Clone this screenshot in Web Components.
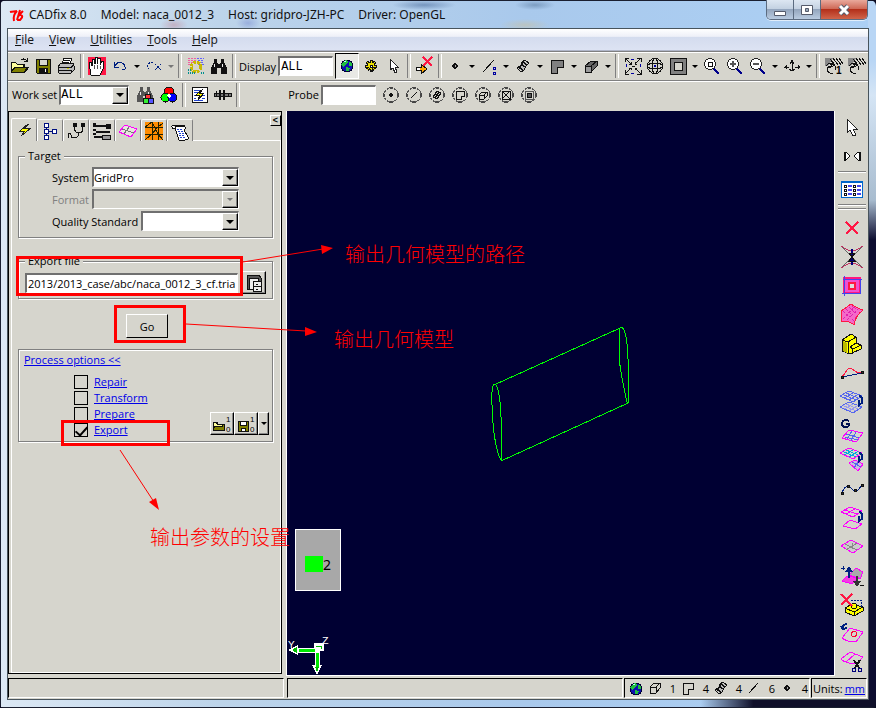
<!DOCTYPE html>
<html lang="en">
<head>
<meta charset="utf-8">
<title>CADfix 8.0</title>
<style>
html,body{height:100%;margin:0}
body{background:#0b0b22;overflow:hidden;font:11px "Open Sans","Noto Sans","Noto Sans CJK SC",sans-serif;color:#000}
</style>
</head>
<body>
<cad-window></cad-window>
<script>
const mesh = (x, y, c, c2) => `<g stroke="${c}" transform="translate(${x} ${y})"><path d="M0 5 9 0 22 5 13 11z"/><path stroke="${c2}" d="M3 3.500 16 9M6 2 18 7M4.500 7 13.500 1.500M9 9 18 3.500"/></g>`;
const ring = inner => `<g stroke="#555"><circle cx="11" cy="11" r="7" stroke-dasharray="3 1"/></g><path fill="#444" stroke="none" d="M9 3h4l-2 3zM9 19h4l-2-3zM3 9v4l3-2zM19 9v4l-3-2z"/>${inner}`;
const lens = inner => `<path d="M13 14 18 19" stroke="#00008b" stroke-width="2.500"/><circle cx="9" cy="9" r="5.500" fill="#fff" stroke="#222"/>${inner}`;
const binoc = c => `<path fill="${c}" stroke="none" d="M6 4h3v3l1 2h2l1-2V4h3v3l3 6v6h-6v-6H9v6H3v-6l3-6z"/><path stroke="#eee" d="M6 9v3M14 9v3"/>`;
const globe = `<circle cx="11" cy="11" r="6" fill="#1010b0" stroke="#003"/><path fill="#20c040" stroke="none" d="M7 7l3-2 2 2-2 3-3 2-2-2zM13 7l3 1 0 3-3 0zM10 12l4 1-1 3-3 0z"/><path stroke="#bff" d="M8 6h2"/>`;
const handLines = `<path fill="#888" stroke="none" d="M2 3h8l-5 8H2z"/><path stroke="#111" d="M3 11c3-4 6-2 5 0-4 0-5 5-1 7h3M7 4l5 6M10 3l5 7M13 3l5 7M16 3l4 6M5 13l5-2M8 8l4 3v4"/>`;
const ICONS = {
  open:`<path fill="#808000" d="M2 17V7h4l2 2h7v3h4l-4 5z"/><path fill="#ffff9c" d="M2 16V7h4l2 2h6v3H6z"/><path d="M2.500 17 6 12h14l-4 5zM12 5c2-2 4-1 6 1M18 3v3h-3"/>`,
  save:`<path fill="#808000" d="M4 4h14v14H5l-1-1z"/><path fill="#d8d8d0" d="M7 4h8v6H7z"/><path fill="#111" d="M7 13h8v5H7z"/><path stroke="#fff" d="M13 14v3"/>`,
  print:`<path fill="#fff" d="M7 9 9 3h8l-2 6z"/><path fill="#bbb" d="M3 12 6 8h12l1 3v4l-3 3H4z"/><path d="M9 5h6M8 7h6M3 12h13l3-2M4 15h12v3M16 13l3-3"/><path stroke="#d0d000" d="M12 13h2"/>`,
  hand:`<path fill="#ff1744" stroke="none" d="M2 2h18v18H2z"/><path fill="#fff" d="M5 20 4 14 3 8l2-1 1 4V4h2l1 5V2h2v7l1-6h2v7l2-4h2l-1 8-3 6z"/><path stroke="#555" d="M8 10v4M11 10v4M14 11v3"/>`,
  undo:`<path stroke="#002080" d="M6 10c4-5 11-2 10 4l-3 1M5 7v5h5M6 11l3-3"/>`,
  redo:`<path stroke="#002080" stroke-dasharray="2 1" d="M10 8C3 6 4 14 7 15M12 9l6 6M18 9l-6 6"/>`,
  select:`<path stroke="#f060a0" stroke-dasharray="2 1" d="M3 3h8M3 5h8M3 7h7M3 9h6"/><path stroke="#6060ff" stroke-dasharray="2 1" d="M12 3h7M13 5h6M13 7h6M14 9h5"/><circle cx="11" cy="12" r="5" stroke="#c8b800" stroke-width="3" stroke-dasharray="3 1"/><path stroke="#009090" stroke-width="2" stroke-dasharray="1 1" d="M3 15h4M3 18h7M16 18h3"/>`,
  binoc:binoc('#111'), globe,
  gear:`<circle cx="11" cy="11" r="4" fill="#ece000" stroke="#111"/><path stroke="#111" stroke-width="3" d="M11 5v3M11 14v3M5 11h3M14 11h3M7 7l2 2M13 13l2 2M15 7l-2 2M7 15l2-2"/><path stroke="#ece000" d="M11 6v9M6 11h10M7 7l8 8M15 7l-8 8"/><path fill="#fff" d="M10 10h2v2h-2z"/>`,
  cursor:`<path fill="#fff" stroke="#222" d="M8 4v11l3-2 2 5 2-1-2-5h3z"/>`,
  export:`<path fill="#ffa500" d="M3 12h5V9l6 5-6 5v-4H3z"/><path fill="#fff" stroke="none" d="M4 13h3v2H4z"/><path stroke="#ff1744" stroke-width="2" d="M10 2l9 9M19 2l-9 9"/>`,
  point:`<path fill="#111" d="M11 8l3 3-3 3-3-3z"/><path stroke="#aaa" d="M11 10v2"/>`,
  line:`<path d="M5 17 16 5"/><path stroke="#0000a0" d="M15 12h2v2h-2zM15 17h2v2h-2z"/>`,
  patch:`<path fill="#bbb" stroke="none" d="M6 15l4-9 6 1-4 9z"/><path d="M5 13c1-2 3 0 4-3 1-4 3-5 4-5l4 3c-2 1-3 2-4 5-1 3-3 3-4 4zM7 14l5-8M7 12l4 3M9 9l4 3M11 7l4 3"/>`,
  face:`<path fill="#808080" d="M5 5h12v7h-6v6H5z"/>`,
  solid:`<path fill="#666" d="M5 11 11 6h6v5l-6 6H5z"/><path fill="#999" d="M5 11h6v6H5z"/><path d="M11 11l6-5"/>`,
  fit:`<path d="M3 3l6 6M19 3l-6 6M3 19l6-6M19 19l-6-6M3 7V3h4M15 3h4v4M3 15v4h4M19 15v4h-4M7 9h2V7M13 7v2h2M7 13h2v2M13 15v-2h2M10 11h3"/><path stroke="#0000a0" stroke-dasharray="3 2" d="M9 4h5M9 18h5M4 9v5M18 9v5"/>`,
  wheel:`<circle cx="11" cy="11" r="7.500"/><ellipse cx="11" cy="11" rx="3" ry="7.500"/><ellipse cx="11" cy="11" rx="7.500" ry="3"/><circle cx="11" cy="11" r="1" fill="#fff" stroke="#0000a0"/>`,
  frame:`<path fill="#808080" d="M3 3h16v16H3z"/><path fill="#d6d5cd" d="M7 7h8v8H7z"/>`,
  zoomwin:lens('<path d="M7 7h4v4H7z"/>'), zoomin:lens('<path stroke="#555" stroke-width="2" d="M9 6v6M6 9h6"/>'), zoomout:lens('<path stroke="#555" stroke-width="2" d="M6 9h6"/>'),
  anchor:`<path d="M11 6v10M3 12h5M14 12h5M8 14l3 2 3-2M10 5h2M9 9l2-3 2 3M4 11v2M18 11v2M5 10v4M17 10v4"/>`,
  handone:handLines+'<text x="13" y="19" font-family="Liberation Sans" font-weight="bold" font-size="10" fill="#000" stroke="none">1</text>', handrot:handLines,
  binocrgb:`<g transform="translate(-1 -1)">${binoc('#555')}</g><circle cx="13" cy="13" r="3" fill="#f33"/><circle cx="11" cy="17" r="3" fill="#3e3"/><circle cx="16" cy="17" r="3" fill="#55f"/>`,
  rgb:`<circle cx="11" cy="7.500" r="4.500" fill="#f00"/><circle cx="7.500" cy="13.500" r="4.500" fill="#0f0"/><circle cx="14.500" cy="13.500" r="4.500" fill="#00f"/><path fill="#fff" stroke="none" d="M11 9l2 3-2 2-2-2z"/>`,
  flash:`<path fill="#fff" d="M3 3h15v15H3z"/><path stroke="#24c" d="M5 6h6M5 8h4M5 11h2M13 11h3M5 14h2M5 16h9M13 14h3"/><path fill="#ff0" d="M14 5 7 11h4l-2 5 6-7h-4z"/>`,
  ruler:`<path fill="#777" d="M2 9h17v3H2z"/><path stroke-width="2" d="M8 6v10M12 6v10"/><path d="M4 7v6M16 9v4"/>`,
  p1:ring('<path fill="#111" d="M11 9l2 2-2 2-2-2z"/>'), p2:ring('<path d="M8 14l6-6"/>'),
  p3:ring('<path d="M7 13l4-6 4 2-4 6zM9 10l4 2M13 8l-4 6"/>'), p4:ring('<path d="M7 7h8v5h-3v3H7z"/>'),
  p5:ring('<path d="M7 11l3-3h5v4l-3 3H7zM7 11h5v4M12 11l3-3"/>'), p6:ring('<path d="M7 7h8v8H7zM7 7l8 8M15 7l-8 8"/>'),
  p7:ring('<path stroke="#555" d="M7 7h8v8H7z"/><path fill="#555" d="M9 9h4v4H9z"/>'),
  bolt:`<path fill="#ff0" stroke="#222" d="M15 5 7 12h5l-4 5 10-8h-6l4-4z"/>`,
  tree:`<path stroke="#001080" fill="#fff" d="M5 3h4v4H5zM5 9h4v4H5zM5 15h4v4H5zM13 9h4v4h-4zM7 7v2M7 13v2M9 11h4"/>`,
  steth:`<path d="M3 18v-4l2-1 2 4 1 1 3-1M10 5c-2 3 0 8 4 8s5-5 3-8M14 13c0 5-5 6-8 4"/><path fill="#111" d="M8 3h3v3H8zM16 3h3v3h-3z"/>`,
  tools:`<path stroke-width="2" d="M2 6h16M5 12h14M3 17h9"/><path fill="#111" d="M15 4h4v4h-4z"/><path fill="#999" d="M11 15h8v4h-8z"/><path stroke-width="2" d="M2 4h3M2 10h3M2 14h3"/>`,
  mesh:`<path stroke="#f0f" fill="#e8e4e0" d="M2 12 8 5l12 4-6 8z"/><path stroke="#777" d="M5 9l12 4M12 7 7 14"/>`,
  orange:`<path fill="#ff8c00" stroke="none" d="M2 2h18v18H2z"/><path stroke="#220" d="M9 2v18M15 2v18M2 7h18M2 14h18M2 7l7-5M9 2l6 12M20 3l-5 4-6 7-7 6M15 14l5 6"/>`,
  scroll:`<path fill="#fff" d="M4 5c-3 1 0 5 2 3l1-2h8c2 1 1 4 0 4l4 7c1 2-1 3-3 3h-6L6 8"/><path d="M4 5h9l3 1"/><path stroke="#24c" stroke-dasharray="2 1" d="M8 9h5M9 11h5M10 13h5M10 15h6M11 17h5"/>`,
  browse:`<path fill="#555" d="M4 3h12l2 3v4H6v7H4z"/><path fill="#eee" d="M6 6h9v11H6z"/><path fill="#eee" d="M10 9h8v10h-8z"/><path d="M10 14h8M13 12h2M13 17h2"/>`,
  load10:`<path fill="#808000" d="M2 17V9h4l1 2h6v6z"/><path fill="#ff9" d="M2 15V9h3l1 2h5v2H5z"/><g font-family="Liberation Sans" font-size="8" fill="#000" stroke="none"><text x="15" y="9">1</text><text x="15" y="19">0</text></g>`,
  save10:`<path fill="#808000" d="M3 8h10v10H3z"/><path fill="#fff" d="M5 8h6v4H5zM6 15h4v3H6z"/><g font-family="Liberation Sans" font-size="8" fill="#000" stroke="none"><text x="15" y="9">1</text><text x="15" y="19">0</text></g>`,
  sface:`<path d="M6 6h10v6h-5v5H6z"/>`, ssolid:`<path d="M6 10l4-4h6v5l-4 5H6zM6 10h6v6M12 10l4-4"/>`,
  line2:'<path d="M6 16 15 6"/>',
  /* 24-unit artwork for the vertical tool strip */
  bcursor:`<path fill="#fff" stroke="#222" d="M7 4v14l3-3 3 6 3-1-3-6h4z"/>`,
  mirror:`<path fill="#fff" d="M4 8h2l4 4-4 4H4zM5 8v8M20 8h-2l-4 4 4 4h2zM19 8v8"/>`,
  list:`<path fill="#fff" stroke="#06c" d="M1 4h21v16H1z"/><path stroke="#06c" stroke-width="2" d="M1 5h21"/><path d="M4 8h2v2H4zM4 12h2v2H4zM4 16h2v2H4zM13 8h2v2h-2zM13 12h2v2h-2zM13 16h2v2h-2z"/><path stroke="#44e" stroke-width="2" d="M8 9h4M8 13h4M8 17h4M17 9h4M17 13h4M17 17h4"/>`,
  del:`<path stroke="#ff1744" stroke-width="2" d="M6 6l12 12M18 6 6 18"/>`,
  collapse:`<path stroke="#c03060" d="M1 1c4 3 7 5 11 5s7-2 11-5M1 23c4-3 7-5 11-5s7 2 11 5"/><path stroke="#666" d="M2 2 12 12 2 22M22 2 12 12l10 10"/><path stroke="#00007a" stroke-width="2" d="M12 4v16"/><path fill="#00007a" d="M9 8h6l-3 4zM9 16h6l-3-4z"/>`,
  sqpink:`<path stroke="#ff1780" stroke-width="2" fill="#f050d0" d="M4 4h16v15H4z"/><path fill="#ddd" stroke="#ff1744" stroke-width="2" d="M9 9h6v6H9z"/><path stroke="#44e" d="M4 2v20M2 19h18L20 5M3 5h19"/>`,
  sheet:`<path fill="#f46ac8" stroke="#ff1744" d="M1 8c4-2 8-6 10-7 4 3 8 5 12 6-4 3-8 8-9 15C11 19 5 18 1 18z"/><path stroke="#e020b0" stroke-dasharray="1 1" d="M3 8l11 10M6 6l10 9M9 4l9 8M12 3l8 6M3 16 14 4M7 17 18 6"/>`,
  lego:`<path fill="#ff0" d="M2 8 11 2l5 3v6l5 2v4l-11 5-8-3z"/><path d="M2 8l6 2v12M8 10l8-5M10 15l6-4M10 15l3 2 8-4M12 17v5"/><path fill="#bb0" stroke="none" d="M3 9l4 2v10l-4-2z"/>`,
  curve:`<path stroke="#ff1744" d="M2 15c4-1 4-8 8-8s5 7 12 4"/><path stroke="#002080" d="M2 16l20-4"/><path fill="#333" d="M1 15h2v2H1zM21 10h2v2h-2z"/>`,
  two:mesh(0,1,'#56e','#56e')+mesh(0,12,'#56e','#99e')+`<path stroke="#002080" stroke-width="2" d="M19 6c4 1 4 5 2 8M23 12l-4 3v-5"/>`,
  gmesh:`<g transform="translate(2 11)"><path stroke="#f0f" d="M0 8 7 0 21 3 14 12z"/><path stroke="#56e" d="M4 4l13 4M3 7l13 3M10 1 5 9M14 2 9 11"/></g><path stroke="#001050" stroke-width="2" d="M9 2C4-1 0 4 3 7c3 3 6 1 6-2H6"/>`,
  pair:mesh(0,0,'#f0f','#0ad')+`<path stroke="#f0f" fill="#cbd" d="M9 15l6-3 8 4-5 7z"/><path stroke="#56e" d="M12 14l9 5M14 20l4-6"/><path stroke="#002080" stroke-width="2" d="M19 5c4 1 4 4 2 7M23 10l-4 3v-5"/>`,
  spline:`<path stroke="#002080" d="M2 16c2-6 6-9 9-5s5 4 7 2l4-5"/><path fill="#333" d="M1 15h2v2H1zM7 8h2v2H7zM14 12h2v2h-2zM21 7h2v2h-2z"/>`,
  pink2:`<path stroke="#f0f" d="M1 6 10 1l12 4-9 6zM5 4l12 4M6 8l9-5M3 20l7-6 12 4-7 5z"/><path stroke="#002080" stroke-width="2" d="M19 6c4 1 4 5 2 8M23 12l-4 3v-5"/>`,
  graymesh:`<path stroke="#f0f" fill="#ccc" d="M1 11 11 5l12 6-10 7z"/><path stroke="#888" d="M5 9l12 6M6 15l11-7M12 8v6"/>`,
  plusminus:`<path fill="#aaa" stroke="#f0f" d="M9 11l7-7 7 4-3 7z"/><path fill="#f040e0" stroke="#f0f" d="M2 17l5-5 12 2-7 6z"/><path stroke="#002080" stroke-width="2" d="M9 14V5M6 8l3-4 3 4"/><path stroke="#002080" d="M1 4h4M3 2v4"/><path stroke="#333" stroke-width="2" d="M17 12v8M14 17l3 4 3-4"/><path d="M20 21h4"/>`,
  legox:`<path fill="#ff0" d="M5 15l7-4 11 3v4l-9 5-9-4z"/><path d="M5 15l9 4 9-5M14 19v4"/><ellipse cx="14" cy="13" rx="3" ry="2.500" fill="#ff0"/><path stroke="#002080" stroke-dasharray="2 1" d="M11 7h10v8"/><path stroke="#ff1744" stroke-width="2" d="M1 1l11 12M12 1 1 12"/>`,
  loop:`<path stroke="#f0f" d="M2 16l8-10 13 4-7 10c-6 0-10-1-14-4z"/><circle cx="14" cy="12" r="2.500" stroke="#f03"/><path stroke="#002080" stroke-width="2" d="M7 2C4 2 3 4 3 6M1 4l2 3 4-1"/>`,
  cut:`<path stroke="#f0f" d="M1 8l9-7 13 5-6 7c-6 0-12-1-16-5zM6 11l9-8"/><path stroke-width="2" d="M14 9l5 8M20 9l-5 8"/><circle cx="14" cy="19" r="2" stroke="#00007a"/><circle cx="20" cy="19" r="2" stroke="#00007a"/>`
};

const define = (tag, css, html, setup) => {
  const tpl = document.createElement('template');
  tpl.innerHTML = `<style>:host,*{box-sizing:border-box}${css}</style>${html}`;
  customElements.define(tag, class extends HTMLElement {
    constructor(){ super(); this.attachShadow({mode:'open'}).append(tpl.content.cloneNode(true)); }
    connectedCallback(){ if (setup) setup(this, this.shadowRoot); }
  });
};

define('cad-icon', `:host{display:inline-flex}svg{display:block;fill:none;stroke:#111;stroke-width:1;shape-rendering:crispEdges}`, `<svg aria-hidden="true"></svg>`, (el, r) => {
  const s = el.getAttribute('size') || 22, svg = r.querySelector('svg');
  svg.setAttribute('width', s); svg.setAttribute('height', s); svg.setAttribute('viewBox', `0 0 ${s} ${s}`);
  svg.innerHTML = ICONS[el.getAttribute('name')] || '';
});

define('tool-button', `:host{display:block;flex:0 1 23px;height:26px}button{width:100%;height:100%;padding:0;border:0;background:none;display:flex;align-items:center;justify-content:center;overflow:hidden}
:host([pressed]) button{border:1px solid;border-color:#000 #fff #fff #000;background:#e8e8e4}
:host([raised]) button{border:1px solid;border-color:#fff #000 #000 #fff;box-shadow:inset -1px -1px #888}
:host([big]){flex:0 0 29px;width:100%}:host([raised]){height:23px}`, `<button></button>`, (el, r) => {
  const name = el.getAttribute('icon'), b = r.querySelector('button');
  b.setAttribute('aria-label', name);
  b.innerHTML = `<cad-icon name="${name}" size="${el.hasAttribute('big') ? 24 : 22}"></cad-icon>`;
});

define('tool-caret', `:host{display:block;flex:0 0 11px;height:26px}button{width:100%;height:100%;padding:0;border:0;background:none;display:grid;place-items:center}i{border:3px solid transparent;border-top-color:#000;border-bottom:0}:host([dim]) i{border-top-color:#777}:host([raised]){height:23px}
:host([raised]) button{border:1px solid;border-color:#fff #000 #000 #fff;box-shadow:inset -1px -1px #888}`, `<button aria-label="More"><i></i></button>`);

define('tool-sep', `:host{display:block;flex:0 0 8px;height:24px}:host::before{content:"";display:block;width:2px;height:100%;margin:0 auto;border-left:1px solid #808080;border-right:1px solid #fff}`, ``);

define('tool-bar', `:host{display:flex;align-items:center;height:29px;border-top:1px solid #808080;box-shadow:inset 0 1px #fff;padding:0 0 0 1px;white-space:nowrap}:host([second]){height:31px;padding:0 0 3px 3px}`, `<slot></slot>`);

define('text-entry', `:host{display:block}input{display:block;width:100%;height:20px;padding:1px 1px 0;border:1px solid;border-width:2px 1px 1px 2px;border-color:#707070 #fff #fff #707070;border-radius:0;background:#fff;font:inherit;color:#000;outline:0}`, `<input>`, (el, r) => {
  const i = r.querySelector('input'); i.value = el.getAttribute('value') || ''; i.setAttribute('aria-label', el.getAttribute('label'));
});

define('combo-box', `:host{display:grid;grid-template-columns:1fr 16px;grid-template-rows:100%;height:20px;border:1px solid;border-width:2px 1px 1px 2px;border-color:#707070 #fff #fff #707070;background:#fff;color:#000}
:host([disabled]){background:#d6d5cd}select{grid-area:1/1/2/3;min-width:0;appearance:none;border:0;padding:0 18px 0 0;background:none;font:inherit;color:#000;outline:0}
span{grid-area:1/2/2/3;pointer-events:none;background:#d6d5cd;border:1px solid;border-color:#fff #000 #000 #fff;box-shadow:inset -1px -1px #808080;display:grid;place-items:center}i{border:4px solid transparent;border-top-color:#000;border-bottom:0}:host([disabled]) i{border-width:3px 3px 0;border-top-color:#777}`, `<select><option></option></select><span><i></i></span>`, (el, r) => {
  r.querySelector('option').textContent = el.getAttribute('value') || ''; const s = r.querySelector('select');
  s.setAttribute('aria-label', el.getAttribute('label')); s.disabled = el.hasAttribute('disabled');
});

define('menu-bar', `:host{display:flex;align-items:center;gap:15px;height:22px;padding:0 7px;background:linear-gradient(#fff,#eef0f8 35%,#d4dcee 40%,#dde3f3);border-bottom:1px solid #b0b6c8}button{border:0;background:none;padding:0;font:12px "Open Sans","Noto Sans",sans-serif;color:#111}`,
 `<button><u>F</u>ile</button><button><u>V</u>iew</button><button><u>U</u>tilities</button><button><u>T</u>ools</button><button><u>H</u>elp</button>`);

define('title-bar', `:host{display:flex;align-items:center;height:29px;padding:0 0 0 1px;white-space:nowrap;font:12px/28px "Noto Sans","Open Sans",sans-serif;color:#111}
.logo{display:block;margin-right:3px}h1{display:flex;gap:14px;margin:0;flex:1;font:inherit;overflow:hidden}
.btns{display:flex;align-self:flex-start;height:20px;border:1px solid #5b6b80;border-top:0;border-radius:0 0 5px 5px;overflow:hidden;box-shadow:0 1px #ffffffa0}button{width:27px;height:19px;padding:0;border:0;border-right:1px solid #5b6b80;background:linear-gradient(#dde7f2,#c4d2e2 45%,#94a6be 50%,#b9cbe0);display:grid;place-items:center}button:last-child{width:46px;border:0;background:linear-gradient(#e9a99c,#cf6a58 45%,#b3301b 50%,#d0644a)}svg{display:block}`,
 `<svg class="logo" width="17" height="16" fill="none" stroke="#f00" stroke-width="2"><path d="M1 5c3-1 5 0 7-1-3 3-4 6-3 10M11 3l-3 10M14 4l-5 5M9 9c4-2 6 0 2 4H8"/></svg><h1><span>CADfix 8.0</span> <span>Model: naca_0012_3</span> <span>Host: gridpro-JZH-PC</span> <span>Driver: OpenGL</span></h1>
 <div class="btns"><button aria-label="Minimize"><svg width="14" height="14"><path d="M1.500 8.500h11v4h-11z" fill="#fff" stroke="#555b6b"/></svg></button><button aria-label="Maximize"><svg width="14" height="14"><path d="M1.500 2.500h11v9h-11z" fill="#fff" stroke="#555b6b"/><path d="M5.500 5.500h3v3h-3z" fill="#9ab" stroke="#555b6b"/></svg></button><button aria-label="Close"><svg width="14" height="14"><path d="M3 3l8 8M11 3l-8 8" stroke="#555b6b" stroke-width="5"/><path d="M3 3l8 8M11 3l-8 8" stroke="#fff" stroke-width="3"/></svg></button></div>`);

define('tab-strip', `:host{display:flex;height:23px}button{flex:0 0 26px;height:22px;margin-top:1px;padding:0;border:1px solid #fff;border-right-color:#808080;border-bottom:0;border-radius:2px 2px 0 0;background:#d6d5cd;display:grid;place-items:center}
.fill{flex:1;border-bottom:1px solid #fff;display:flex;justify-content:flex-end}.tabs{display:flex;box-shadow:inset 0 -1px #fff}.tabs button:first-child{height:23px;margin-top:0}button.fold{flex:0 0 11px;height:11px;margin:-3px 0 0;border:1px solid;border-color:#fff #000 #000 #fff;border-radius:0;font:bold 9px/9px "Liberation Sans",sans-serif}`,
 `<div class="tabs"></div><div class="fill"><button class="fold" aria-label="Collapse">&lt;</button></div>`, (el, r) => {
  r.querySelector('.tabs').innerHTML = ['bolt','tree','steth','tools','mesh','orange','scroll'].map(n => `<button aria-label="${n}"><cad-icon name="${n}"></cad-icon></button>`).join('');
});

define('group-box', `:host{display:block}fieldset{margin:0;padding:0;min-width:0;border:1px solid #808080;box-shadow:1px 1px #fff,inset 1px 1px #fff;height:100%}legend{margin-left:6px;padding:0 3px;line-height:12px;background:#d6d5cd}`, `<fieldset><legend></legend><slot></slot></fieldset>`, (el, r) => {
  const l = r.querySelector('legend'); if (el.getAttribute('label')) l.textContent = el.getAttribute('label'); else l.remove();
});

define('check-link', `:host{display:block;height:16px}label{display:flex;align-items:center;gap:6px;height:16px}input{appearance:none;margin:0;width:14px;height:14px;border:1px solid #000;display:grid;place-items:center}input:checked::before{content:"";width:5px;height:10px;border:solid #000;border-width:0 2px 2px 0;transform:rotate(42deg)}a{color:#0000e8;line-height:16px}`, `<label><input type="checkbox"><a href="#"><slot></slot></a></label>`, (el, r) => { r.querySelector('input').checked = el.hasAttribute('checked'); });

define('side-panel', `:host{display:flex;flex-direction:column;border:1px solid #000;padding:6px 0 0 2px;margin:0 4px 2px 0;min-width:0}
.page{flex:1;border:1px solid #fff;border-width:0 1px 1px;padding:9px 7px 0 6px}
.target{display:grid;gap:2px;padding:5px 33px 6px}.row{display:flex;align-items:center;gap:3px}.row span{flex:0 0 36px;text-align:right;white-space:nowrap}.row combo-box{flex:1}.dim{color:#808080}.wide span{flex:0 0 auto}
.file{margin-top:17px}.line{display:flex;align-items:center;gap:4px;padding:4px 6px 4px}.line text-entry{flex:1}.line tool-button{flex:0 0 23px}
.go{display:block;width:42px;height:24px;margin:15px 0 11px 108px;border:1px solid;border-color:#fff #000 #000 #fff;background:#d6d5cd;font:inherit;padding:0}
.opts{display:grid;grid-template-columns:1fr auto;padding:2px 3px 3px 5px}.opts>a{grid-column:1/3;justify-self:start;color:#0000e8;line-height:16px;margin-bottom:6px}.checks{padding-left:50px}.btns{display:flex;align-self:end;margin-bottom:3px}.btns tool-button{flex:0 0 23px}`,
 `<tab-strip></tab-strip><div class="page">
 <group-box label="Target"><div class="target"><div class="row"><span>System</span><combo-box label="System" value="GridPro"></combo-box></div><div class="row dim"><span>Format</span><combo-box label="Format" disabled></combo-box></div><div class="row wide"><span>Quality Standard</span><combo-box label="Quality Standard"></combo-box></div></div></group-box>
 <group-box class="file" label="Export file"><div class="line"><text-entry label="Export file" value="2013/2013_case/abc/naca_0012_3_cf.tria"></text-entry><tool-button raised icon="browse"></tool-button></div></group-box>
 <button class="go">Go</button>
 <group-box><div class="opts"><a href="#">Process options &lt;&lt;</a><div class="checks"><check-link>Repair</check-link><check-link>Transform</check-link><check-link>Prepare</check-link><check-link checked>Export</check-link></div><div class="btns"><tool-button raised icon="load10"></tool-button><tool-button raised icon="save10"></tool-button><tool-caret raised></tool-caret></div></div></group-box></div>`);

define('model-view', `:host{display:block;position:relative;background:#000033;border:solid #fff;border-width:0 1px 1px;overflow:hidden}svg{position:absolute;fill:none}.model{inset:0;width:100%;height:100%;stroke:#00ff00;shape-rendering:crispEdges}
.key{position:absolute;left:8px;bottom:84px;width:46px;height:62px;background:#a8a8a8;border:1px solid #fff;display:flex;align-items:center;padding:8px 0 0 9px;font:14px "Noto Sans",sans-serif}.key i{width:18px;height:16px;background:#0f0}.axes{left:0;bottom:0;width:50px;height:44px}text{font:11px "Liberation Mono",monospace;fill:#fff;stroke:none}`,
 `<svg class="model"><path d="M208 273.500 332 217.500q3-2 4 0c3 4 5 18 5 30v44l-1 1L214 350l0-44c0-14-3-32-6-33-2 1-3 2-3 8-1 32 4 60 9 68M332 218v27c1 14 5 33 8 46"/></svg>
 <div class="key"><i></i>2</div><svg class="axes" shape-rendering="crispEdges"><path stroke="#fff" stroke-width="5" d="M8 19h25M30 20v16"/><path fill="#fff" d="M1 19l10-5v10zM25 34h10l-5 10zM27 12h10v8H27z"/><path stroke="#00e800" stroke-width="3" d="M12 19h16M30 22v15"/><path fill="#0b0" d="M5 19l5-3v6zM28 36h4l-2 5z"/><path stroke="#0b0" d="M29 15h5v3"/><text x="1" y="17">Y</text><text x="35" y="13">Z</text></svg>`);

define('tool-strip', `:host{display:flex;flex-direction:column;align-items:center;padding:1px 0 0 1px;overflow:hidden}.list{display:contents}hr{width:28px;height:2px;margin:1px 0;border:0;border-top:1px solid #808080;border-bottom:1px solid #fff;flex:none}hr:last-of-type{margin:1px 0 3px}`, `<tool-button big icon="bcursor"></tool-button><tool-button big icon="mirror"></tool-button><hr><tool-button big icon="list"></tool-button><hr><hr><div class="list"></div>`, (el, r) => {
  r.querySelector('.list').innerHTML = ['del','collapse','sqpink','sheet','lego','curve','two','gmesh','pair','spline','pink2','graymesh','plusminus','legox','loop','cut'].map(n => `<tool-button big icon="${n}"></tool-button>`).join('');
});

define('status-bar', `:host{display:grid;grid-template-columns:276px 1fr auto auto;gap:3px;height:23px;padding-top:2px}div{display:flex;align-items:center;min-width:0;height:20px;border:1px solid;border-color:#000 #fff #fff #000;white-space:nowrap}.n span{width:10px;text-align:right;margin-right:1px}.n cad-icon:first-child{margin-right:-1px}.u{gap:2px;padding:0 1px;margin-right:1px}a{color:#0000e8}.n,.u{margin-left:-2px}`,
 `<div></div><div></div><div class="n"><cad-icon name="globe" size="20"></cad-icon><cad-icon name="ssolid"></cad-icon><span>1</span><cad-icon name="sface"></cad-icon><span>4</span><cad-icon name="patch"></cad-icon><span>4</span><cad-icon name="line2"></cad-icon><span>6</span><cad-icon name="point"></cad-icon><span>4</span></div><div class="u">Units: <a href="#">mm</a></div>`);

define('note-layer', `:host{position:absolute;inset:0;pointer-events:none;overflow:hidden}svg{position:absolute;inset:0;width:100%;height:100%;fill:none;stroke:#f00}p{position:absolute;margin:0;color:#f00;font:300 20px/24px "Noto Sans CJK SC",sans-serif;white-space:nowrap}`,
 `<svg><g stroke-width="3" shape-rendering="crispEdges"><path d="M17.500 257.500h224v37h-224zM115.500 306.500h69v35h-69zM62.500 421.500h106v23h-106z"/></g><path d="M243 262 323 249M186 324l120 7M120 450l34 52"/><g fill="#f00" stroke="none"><path d="M321 245l12 3-11 6zM305 327l12 5-12 4zM149 502l7-4 3 12z"/></g></svg>
 <p style="left:345px;top:242px">输出几何模型的路径</p><p style="left:334px;top:327px">输出几何模型</p><p style="left:150px;top:525px">输出参数的设置</p>`);

define('cad-window', `:host{display:grid;grid-template-rows:29px 1fr;height:100%;position:relative;padding:0 8px 9px;border-radius:6px 6px 4px 4px;overflow:hidden;
background:linear-gradient(#1a1f30,#1a1f30) top/100% 1px no-repeat,linear-gradient(#1a1f30,#1a1f30) left/1px 100% no-repeat,linear-gradient(#1a1f30,#1a1f30) bottom/100% 1px no-repeat,
radial-gradient(closest-side,#4a6b9a90,transparent) 392px 0/64px 10px no-repeat,radial-gradient(closest-side,#5a7ba090,transparent) 515px 0/40px 10px no-repeat,radial-gradient(closest-side,#c8c0a090,transparent) 500px 19px/50px 12px no-repeat,radial-gradient(closest-side,#c0708060,transparent) 160px 18px/28px 14px no-repeat,radial-gradient(closest-side,#5060c050,transparent) 236px 16px/24px 14px no-repeat,
linear-gradient(90deg,transparent 0,transparent 80%,#10102a 86%) bottom/100% 8px no-repeat,linear-gradient(#b9d6f5 0,#b9d6f5 60px,#d5e5f5 95px,#a8bccf 200px,#0d0d30 240px,#0d0d30) right/8px 100% no-repeat,linear-gradient(90deg,#dce8f4,#bdd4ea 25%,#a9c9ec 60%,#acd0f5)}
.client{display:grid;grid-template-rows:auto auto auto 1fr auto;min-height:0;background:#d6d5cd;box-shadow:0 0 0 1px #48545c;min-width:0}
.main{display:grid;grid-template-columns:minmax(0,278px) minmax(0,1fr) 33px;min-height:0}.mono{font:12px "Liberation Mono",monospace}tool-bar text-entry,tool-bar combo-box{flex:none}.lab{padding:0 2px 0 1px}.ds{width:55px;margin-right:2px}.ws{width:70px;margin-right:5px}.pb{width:55px;margin-right:4px}.pl{margin-left:45px}`,
 `<title-bar></title-bar><div class="client"><menu-bar></menu-bar><tool-bar class="one"></tool-bar><tool-bar second class="two"></tool-bar><div class="main"><side-panel></side-panel><model-view></model-view><tool-strip></tool-strip></div><status-bar></status-bar></div><note-layer></note-layer>`, (el, r) => {
  const make = s => s.split(' ').map(n => n === '|' ? '<tool-sep></tool-sep>' : n === 'v' ? '<tool-caret></tool-caret>' : n === 'w' ? '<tool-caret dim></tool-caret>' : n === 'globe' ? '<tool-button pressed icon="globe"></tool-button>' : `<tool-button icon="${n}"></tool-button>`).join('');
  r.querySelector('.one').innerHTML = make('open save print | hand undo v redo w | select binoc |') + '<span class="lab">Display</span><text-entry class="ds mono" label="Display" value="ALL"></text-entry>' + make('globe gear cursor | export | point v line v patch v face v solid v | fit wheel frame v zoomwin zoomin zoomout v anchor v | handone handrot');
  r.querySelector('.two').innerHTML = '<span class="lab">Work set</span><combo-box class="ws mono" label="Work set" value="ALL"></combo-box>' + make('binocrgb rgb | flash ruler |') + '<span class="lab pl">Probe</span><text-entry class="pb" label="Probe"></text-entry>' + make('p1 p2 p3 p4 p5 p6 p7');
});
</script>
</body>
</html>
